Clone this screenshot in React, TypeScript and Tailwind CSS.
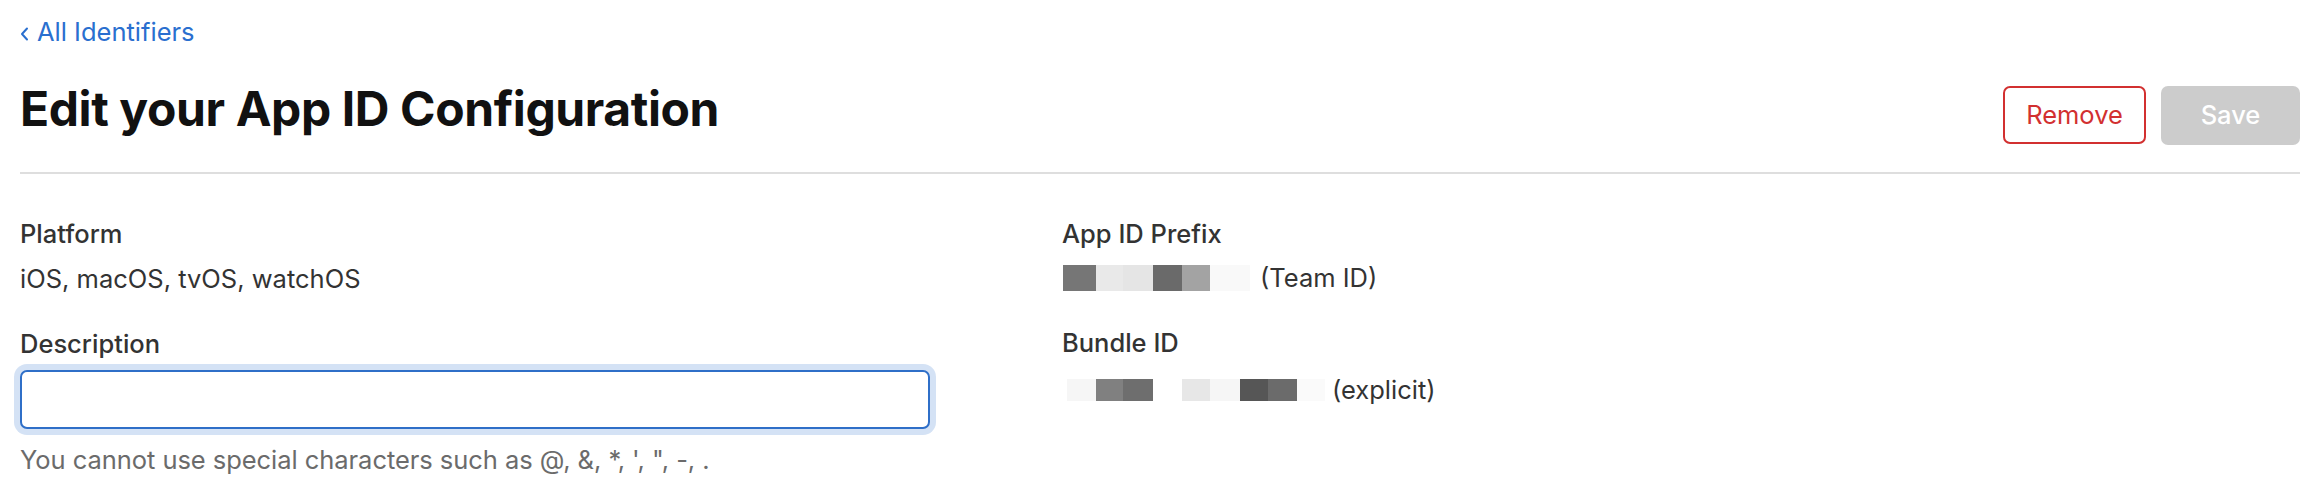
import React from "react";

const teamBlocks = [
  { w: 33, c: "#767676" },
  { w: 27, c: "#e9e9e9" },
  { w: 30, c: "#e5e5e5" },
  { w: 29, c: "#6a6a6a" },
  { w: 28, c: "#a3a3a3" },
  { w: 40, c: "#f9f9f9" },
];

const bundleBlocks = [
  { w: 29, c: "#f6f6f6" },
  { w: 27, c: "#808080" },
  { w: 30, c: "#6e6e6e" },
  { w: 29, c: "#ffffff" },
  { w: 28, c: "#e7e7e7" },
  { w: 30, c: "#f6f6f6" },
  { w: 28, c: "#565656" },
  { w: 29, c: "#6b6b6b" },
  { w: 28, c: "#fafafa" },
];

export default function App() {
  return (
    <div className="w-[2312px] h-[502px] bg-white pl-[20px] pr-[12px] font-['Inter','Liberation_Sans',sans-serif] overflow-hidden">
      <div className="pt-[14px] h-[50px]">
        <a className="flex items-center gap-[8px] text-[25.5px] leading-[36px] text-[#2a6fcf]">
          <svg width="9" height="14" viewBox="0 0 9 14" className="mt-[3px]">
            <path d="M7 1.5 L2 7 L7 12.5" fill="none" stroke="#2a6fcf" strokeWidth="2" strokeLinecap="round" strokeLinejoin="round" />
          </svg>
          <span>All Identifiers</span>
        </a>
      </div>
      <div className="flex justify-between items-start h-[122px]">
        <h1 className="mt-[31px] text-[48px] leading-[56px] font-bold text-[#111111] tracking-[-0.4px]">
          Edit your App ID Configuration
        </h1>
        <div className="flex gap-[15px] mt-[36px]">
          <button className="w-[143px] h-[58px] rounded-[7px] border-2 border-[#d23030] text-[#d23030] text-[25.5px] bg-white">
            Remove
          </button>
          <button className="w-[139px] h-[59px] rounded-[7px] bg-[#cccccc] text-white text-[25.5px] font-medium">
            Save
          </button>
        </div>
      </div>
      <div className="h-[2px] bg-[#dedede]" />
      <div className="grid grid-cols-[1042px_1fr] text-[25.5px] leading-[36px] text-[#333333]">
        <div>
          <div className="mt-[42px] font-medium">Platform</div>
          <div className="mt-[9px]">iOS, macOS, tvOS, watchOS</div>
          <div className="mt-[29px] font-medium">Description</div>
          <div className="mt-[8px] w-[910px] h-[59px] rounded-[7px] border-2 border-[#2f6fc8] bg-white shadow-[0_0_0_6px_#d4e2f5]" />
          <div className="mt-[13px] text-[#6b6b6b] tracking-[-0.05px]">
            You cannot use special characters such as @, &amp;, *, ', ", -, .
          </div>
        </div>
        <div>
          <div className="mt-[42px] font-medium">App ID Prefix</div>
          <div className="mt-[8px] flex items-center">
            <div className="flex ml-[1px] h-[26px]">
              {teamBlocks.map((b, i) => (
                <div key={i} className="h-full" style={{ width: b.w, background: b.c }} />
              ))}
            </div>
            <span className="ml-[10px]">(Team ID)</span>
          </div>
          <div className="mt-[29px] font-medium">Bundle ID</div>
          <div className="mt-[11px] flex items-center">
            <div className="flex ml-[5px] h-[22px]">
              {bundleBlocks.map((b, i) => (
                <div key={i} className="h-full" style={{ width: b.w, background: b.c }} />
              ))}
            </div>
            <span className="ml-[7px]">(explicit)</span>
          </div>
        </div>
      </div>
    </div>
  );
}
